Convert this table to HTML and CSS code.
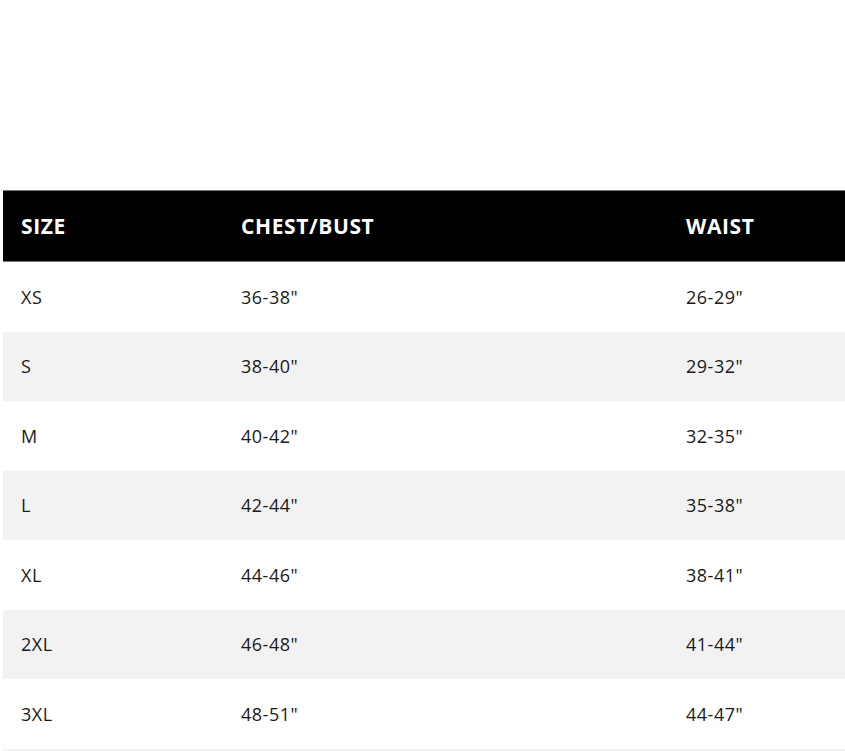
FILE: index.html
```html
<!DOCTYPE html>
<html>
<head>
<meta charset="utf-8">
<link rel="stylesheet" href="styles.css">
</head>
<body>
<div class="page">
  <div class="table">
    <div class="row head">
      <div class="cell">SIZE</div>
      <div class="cell">CHEST/BUST</div>
      <div class="cell">WAIST</div>
    </div>
    <div class="row"><div class="cell">XS</div><div class="cell">36-38"</div><div class="cell">26-29"</div></div>
    <div class="row alt"><div class="cell">S</div><div class="cell">38-40"</div><div class="cell">29-32"</div></div>
    <div class="row"><div class="cell">M</div><div class="cell">40-42"</div><div class="cell">32-35"</div></div>
    <div class="row alt"><div class="cell">L</div><div class="cell">42-44"</div><div class="cell">35-38"</div></div>
    <div class="row"><div class="cell">XL</div><div class="cell">44-46"</div><div class="cell">38-41"</div></div>
    <div class="row alt"><div class="cell">2XL</div><div class="cell">46-48"</div><div class="cell">41-44"</div></div>
    <div class="row"><div class="cell">3XL</div><div class="cell">48-51"</div><div class="cell">44-47"</div></div>
    <div class="row alt tail"></div>
  </div>
</div>
</body>
</html>
```
FILE: styles.css
```css
html, body {
  margin: 0;
  padding: 0;
  background: #fff;
}
.page {
  padding: 190px 0 0 3px;
  font-family: "Open Sans", "Liberation Sans", sans-serif;
  color: #1a1a1a;
}
.table {
  width: 842px;
}
.row {
  display: grid;
  grid-template-columns: 220px 445px 1fr;
  height: 69.5px;
  align-items: center;
  font-size: 18px;
  letter-spacing: 0.5px;
}
.row .cell {
  padding-left: 18px;
}
.row.alt {
  background: #f2f2f2;
}
.row.tail {
  height: 3px;
}
.row.head {
  height: 72px;
  background: #000;
  color: #fff;
  font-weight: 700;
  font-size: 21px;
  letter-spacing: 0.6px;
  border-top: 1px solid #777;
  border-bottom: 1px solid #777;
  box-sizing: border-box;
}
```
